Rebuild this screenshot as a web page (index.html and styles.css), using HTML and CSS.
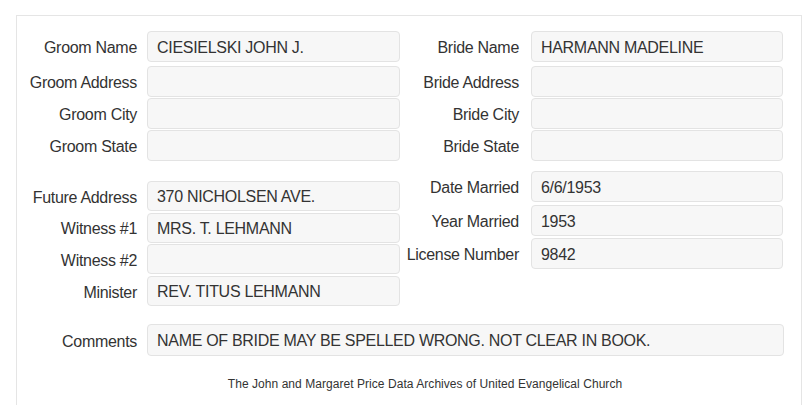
FILE: index.html
```html
<!DOCTYPE html>
<html>
<head>
<meta charset="utf-8">
<link rel="stylesheet" href="styles.css">
</head>
<body>
<div class="panel">
  <div class="section s1">
    <div class="col">
      <div class="row r-first"><label>Groom Name</label><div class="field">CIESIELSKI JOHN J.</div></div>
      <div class="row"><label>Groom Address</label><div class="field"></div></div>
      <div class="row"><label>Groom City</label><div class="field"></div></div>
      <div class="row"><label>Groom State</label><div class="field"></div></div>
    </div>
    <div class="col right">
      <div class="row r-first"><label>Bride Name</label><div class="field">HARMANN MADELINE</div></div>
      <div class="row"><label>Bride Address</label><div class="field"></div></div>
      <div class="row"><label>Bride City</label><div class="field"></div></div>
      <div class="row"><label>Bride State</label><div class="field"></div></div>
    </div>
  </div>
  <div class="section s2">
    <div class="col left2">
      <div class="row"><label>Future Address</label><div class="field">370 NICHOLSEN AVE.</div></div>
      <div class="row"><label>Witness #1</label><div class="field">MRS. T. LEHMANN</div></div>
      <div class="row"><label>Witness #2</label><div class="field"></div></div>
      <div class="row"><label>Minister</label><div class="field">REV. TITUS LEHMANN</div></div>
    </div>
    <div class="col right right2">
      <div class="row"><label>Date Married</label><div class="field">6/6/1953</div></div>
      <div class="row"><label>Year Married</label><div class="field">1953</div></div>
      <div class="row"><label>License Number</label><div class="field">9842</div></div>
    </div>
  </div>
  <div class="row comments"><label>Comments</label><div class="field wide">NAME OF BRIDE MAY BE SPELLED WRONG. NOT CLEAR IN BOOK.</div></div>
  <p class="footer">The John and Margaret Price Data Archives of United Evangelical Church</p>
</div>
</body>
</html>
```

FILE: styles.css
```css
html, body {
  margin: 0;
  padding: 0;
  background: #fff;
}
body {
  font-family: "Liberation Sans", Arial, sans-serif;
  color: #333;
  font-size: 16px;
  letter-spacing: -0.3px;
}
.panel {
  margin: 15px 3px 0 16px;
  border: 1px solid #e5e5e5;
  border-bottom: none;
  padding: 15px 0 30px 0;
  height: 400px;
  box-sizing: border-box;
}
.section {
  display: flex;
}
.col {
  display: flex;
  flex-direction: column;
  width: 383px;
}
.row {
  display: flex;
  align-items: center;
  height: 31px;
  margin-bottom: 1px;
}
.row.r-first {
  margin-bottom: 4px;
}
.row label {
  width: 120px;
  text-align: right;
  padding-top: 3px;
  white-space: nowrap;
}
.field {
  box-sizing: border-box;
  width: 253px;
  height: 31px;
  margin-left: 10px;
  background: #f7f7f7;
  border: 1px solid #e3e3e3;
  border-radius: 4px;
  padding: 2px 9px 0 9px;
  line-height: 27px;
  white-space: nowrap;
}
.right .field {
  margin-left: 12px;
  width: 254px;
}
.s2 {
  margin-top: 9px;
}
.left2 {
  padding-top: 10px;
}
.left2 .row {
  height: 30px;
  margin-bottom: 1.7px;
}
.left2 .field {
  height: 30px;
  line-height: 26px;
}
.right2 .row {
  margin-bottom: 2.5px;
}
.comments {
  margin-top: 17px;
}
.comments .field.wide {
  width: 637px;
  height: 32px;
  line-height: 28px;
}
.footer {
  margin: 21px 0 0 0;
  text-align: center;
  font-size: 12px;
  letter-spacing: 0.05px;
  padding-left: 32px;
}
```
